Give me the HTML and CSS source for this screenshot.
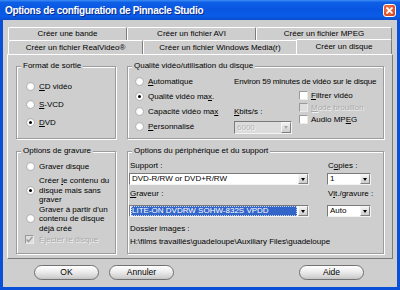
FILE: index.html
```html
<!DOCTYPE html>
<html lang="fr">
<head>
<meta charset="utf-8">
<title>Options de configuration de Pinnacle Studio</title>
<link rel="stylesheet" href="styles.css">
</head>
<body>
<div class="window">
  <div class="titlebar">
    <span class="title">Options de configuration de Pinnacle Studio</span>
    <span class="close"><svg width="7" height="7" viewBox="0 0 7 7"><path d="M0.5 0.5L6.5 6.5M6.5 0.5L0.5 6.5" stroke="#fff" stroke-width="1.6" fill="none"/></svg></span>
  </div>
  <div class="client">
    <div class="tabs">
      <div class="tabrow row1">
        <div class="tab">Créer une bande</div>
        <div class="tab">Créer un fichier AVI</div>
        <div class="tab">Créer un fichier MPEG</div>
      </div>
      <div class="tabrow row2">
        <div class="tab">Créer un fichier RealVideo®</div>
        <div class="tab">Créer un fichier Windows Media(r)</div>
        <div class="tab active">Créer un disque</div>
      </div>
    </div>
    <div class="panel">
      <fieldset class="group">
        <legend>Format de sortie</legend>
        <div class="format-opts">
          <div class="opt r18"><span class="radio"></span><span><u>C</u>D vidéo</span></div>
          <div class="opt r18"><span class="radio"></span><span><u>S</u>-VCD</span></div>
          <div class="opt r18"><span class="radio on"></span><span><u>D</u>VD</span></div>
        </div>
      </fieldset>
      <fieldset class="group">
        <legend>Qualité vidéo/utilisation du disque</legend>
        <div class="quality">
          <div class="q-radios">
            <div class="opt r15"><span class="radio"></span><span><u>A</u>utomatique</span></div>
            <div class="opt r15"><span class="radio on"></span><span>Qualité vidéo ma<u>x</u>.</span></div>
            <div class="opt r15"><span class="radio"></span><span>Capacité vidéo ma<u>x</u></span></div>
            <div class="opt r15"><span class="radio"></span><span><u>P</u>ersonnalisé</span></div>
          </div>
          <div class="q-right">
            <div class="estimate">Environ 59 minutes de vidéo sur le disque</div>
            <div class="q-lower">
              <div class="kbits">
                <div class="lbl"><u>K</u>bits/s :</div>
                <div class="select disabled small"><span class="val">6000</span><span class="arrow"></span></div>
              </div>
              <div class="checks">
                <div class="opt r12"><span class="check"></span><span><u>F</u>iltrer vidéo</span></div>
                <div class="opt r12 dis"><span class="check off"></span><span><u>M</u>ode brouillon</span></div>
                <div class="opt r12"><span class="check"></span><span>Audio MP<u>E</u>G</span></div>
              </div>
            </div>
          </div>
        </div>
      </fieldset>
      <fieldset class="group">
        <legend>Options de gravure</legend>
        <div class="burn">
          <div class="opt r12"><span class="radio"></span><span>Graver disque</span></div>
          <div class="opt multi first"><span class="radio on"></span><span>Créer <u>l</u>e contenu du<br>disque mais sans<br>graver</span></div>
          <div class="opt multi"><span class="radio"></span><span>Graver à partir d'un<br>contenu de disque<br>déjà créé</span></div>
          <div class="opt r13 dis eject"><span class="check off ticked"><svg width="7" height="7" viewBox="0 0 7 7"><path d="M0.5 3.5L2.5 5.5L6.5 1" stroke="#9a9a9a" stroke-width="1.4" fill="none"/></svg></span><span>Éjecter le disque</span></div>
        </div>
      </fieldset>
      <fieldset class="group">
        <legend>Options du périphérique et du support</legend>
        <div class="device">
          <div class="dev-grid">
            <div class="lbl first">Support :</div>
            <div class="lbl first">C<u>o</u>pies :</div>
            <div class="select s1"><span class="val">DVD-R/RW or DVD+R/RW</span><span class="arrow"></span></div>
            <div class="select s1"><span class="val">1</span><span class="arrow"></span></div>
            <div class="lbl second"><u>G</u>raveur :</div>
            <div class="lbl second">V<u>i</u>t./gravure :</div>
            <div class="select s2 focus"><span class="val"><span class="hl">LITE-ON DVDRW SOHW-832S VPDD</span></span><span class="arrow"></span></div>
            <div class="select s2"><span class="val">Auto</span><span class="arrow"></span></div>
          </div>
          <div class="lbl dossier">Dossier images :</div>
          <div class="lbl path">H:\films travaillés\guadeloupe\Auxiliary Files\guadeloupe</div>
        </div>
      </fieldset>
    </div>
    <div class="buttons">
      <div class="btn">OK</div>
      <div class="btn">Annuler</div>
      <div class="btn help">Aide</div>
    </div>
  </div>
</div>
</body>
</html>
```
FILE: styles.css
```css
html, body {
  margin: 0;
  padding: 0;
  background: #ffffff;
}
body {
  font-family: "Liberation Sans", Arial, sans-serif;
  font-size: 8px;
  color: #000;
}
.window {
  width: 400px;
  height: 290px;
  display: flex;
  flex-direction: column;
  background: #0a4fd8;
  box-sizing: border-box;
}
.titlebar {
  height: 20px;
  flex: none;
  display: flex;
  align-items: center;
  justify-content: space-between;
  padding: 0 4px 0 5px;
  background: linear-gradient(to bottom, #3d8cf5 0%, #0f5fe6 12%, #0856e2 45%, #0a5ce8 80%, #0a4ed0 100%);
}
.title {
  color: #fff;
  font-weight: bold;
  font-size: 10px;
  letter-spacing: -0.3px;
  text-shadow: 1px 1px 0 #0b2a8a;
  padding-top: 1px;
}
.close {
  width: 13px;
  height: 13px;
  box-sizing: border-box;
  border: 1px solid #fff;
  border-radius: 3px;
  background: radial-gradient(circle at 40% 40%, #f08a66 0%, #e2572e 55%, #c43a12 100%);
  display: flex;
  align-items: center;
  justify-content: center;
}
.close svg { display: block; }
.client {
  flex: 1;
  margin: 0 3px 3px;
  background: #cecece;
  padding: 7px 4px 0;
  display: flex;
  flex-direction: column;
}
.tabs {
  margin: 0 1px;
}
.tabrow {
  display: grid;
}
.row1 {
  grid-template-columns: 119px 129px 136px;
  height: 13px;
}
.row2 {
  grid-template-columns: 135px 154px 95px;
  height: 14px;
}
.tab {
  box-sizing: border-box;
  border-top: 1px solid #fff;
  border-left: 1px solid #fff;
  border-right: 1px solid #7c7c7c;
  border-radius: 2px 2px 0 0;
  text-align: center;
  white-space: nowrap;
  overflow: hidden;
}
.row1 .tab { line-height: 12px; }
.row2 .tab { line-height: 13px; }
.tab.active {
  position: relative;
  z-index: 1;
  height: 15px;
  margin-bottom: -1px;
  margin-top: -1px;
  margin-left: -1px;
  background: #cecece;
  line-height: 14px;
}
.panel {
  height: 205px;
  box-sizing: border-box;
  border: 1px solid;
  border-color: #fff #7c7c7c #7c7c7c #fff;
  display: grid;
  grid-template-columns: 100px 257px;
  grid-template-rows: 78px 108px;
  column-gap: 11px;
  row-gap: 7px;
  padding: 6px 0 0 8px;
}
.group {
  margin: 0;
  padding: 0;
  min-width: 0;
  border: 1px solid #9c9c9c;
  box-shadow: inset 1px 1px 0 #fff, 1px 1px 0 #fff;
  box-sizing: border-box;
}
.group legend {
  font-size: 8px;
  line-height: 10px;
  padding: 0 2px;
  margin-left: 4px;
  background: #cecece;
}
.opt {
  display: flex;
  align-items: center;
  gap: 4px;
  white-space: nowrap;
}
.r18 { height: 18px; }
.r15 { height: 15px; }
.r12 { height: 12px; }
.r13 { height: 13px; }
.radio {
  flex: none;
  width: 9px;
  height: 9px;
  box-sizing: border-box;
  border-radius: 50%;
  border: 1px solid #b4b4b4;
  background: radial-gradient(circle at 60% 60%, #ffffff 45%, #e6e6e6 100%);
  display: flex;
  align-items: center;
  justify-content: center;
}
.radio.on::after {
  content: "";
  width: 3px;
  height: 3px;
  border-radius: 50%;
  background: #000;
}
.check {
  flex: none;
  width: 9px;
  height: 9px;
  box-sizing: border-box;
  border: 1px solid;
  border-color: #9a9a9a #eaeaea #eaeaea #9a9a9a;
  background: #fff;
  display: flex;
  align-items: center;
  justify-content: center;
}
.check.off {
  background: #dedede;
}
.check svg { display: block; }
.dis {
  color: #a9a9a9;
  text-shadow: 1px 1px 0 #f2f2f2;
}
.format-opts {
  padding: 6px 0 0 9px;
}
.quality {
  display: grid;
  grid-template-columns: 106px 1fr;
  padding-top: 3px;
}
.q-radios {
  padding-left: 7px;
}
.estimate {
  line-height: 15px;
  white-space: nowrap;
  letter-spacing: -0.15px;
}
.q-lower {
  display: flex;
  gap: 7px;
}
.kbits {
  width: 58px;
  padding-top: 17px;
}
.lbl {
  line-height: 11px;
  white-space: nowrap;
}
.kbits .lbl { line-height: 12px; }
.select {
  height: 12px;
  box-sizing: border-box;
  border: 1px solid;
  border-color: #7a7a7a #f4f4f4 #f4f4f4 #7a7a7a;
  background: #fff;
  display: flex;
  align-items: stretch;
}
.select.small {
  height: 13px;
  margin-top: 3px;
}
.select .val {
  flex: 1;
  padding-left: 2px;
  line-height: 10px;
  white-space: nowrap;
  overflow: hidden;
}
.select.small .val { line-height: 11px; }
.select .arrow {
  flex: none;
  width: 10px;
  box-sizing: border-box;
  border: 1px solid;
  border-color: #f6f6f6 #808080 #808080 #f6f6f6;
  background: linear-gradient(#f2f2f2, #cdcdcd);
  display: flex;
  align-items: center;
  justify-content: center;
}
.select .arrow::after {
  content: "";
  width: 0;
  height: 0;
  border-left: 2.5px solid transparent;
  border-right: 2.5px solid transparent;
  border-top: 3px solid #000;
}
.select.disabled {
  background: #dcdcdc;
}
.select.disabled .val {
  color: #b4b4b4;
  text-shadow: 1px 1px 0 #f4f4f4;
}
.select.disabled .arrow::after {
  border-top-color: #a8a8a8;
}
.select.focus .val {
  padding: 0 1px 0 1px;
  display: flex;
}
.select.focus .hl {
  flex: 1;
  background: #3465c8;
  color: #fff;
  outline: 1px dotted #c8d6f2;
  outline-offset: -1px;
  line-height: 10px;
  padding-left: 1px;
  overflow: hidden;
}
.checks {
  display: flex;
  flex-direction: column;
}
.checks .opt { gap: 3px; }
.burn {
  padding: 4px 0 0 9px;
}
.multi {
  line-height: 9.5px;
}
.multi.first {
  margin-top: 4px;
}
.eject {
  padding-left: 0;
  margin-left: -1px;
  gap: 5px;
}
.device {
  padding: 4px 0 0 1px;
}
.dev-grid {
  display: grid;
  grid-template-columns: 180px 44px;
  column-gap: 18px;
}
.dev-grid .lbl { padding-left: 1px; }
.dev-grid .select.s1 { margin-top: 2px; }
.dev-grid .lbl.second { margin-top: 3px; }
.dev-grid .select.s2 { margin-top: 6px; }
.dossier {
  margin-top: 6px;
  padding-left: 1px;
}
.path {
  margin-top: 2px;
  padding-left: 1px;
}
.buttons {
  display: flex;
  gap: 10px;
  padding: 6px 29px 0 27px;
}
.btn {
  width: 65px;
  height: 15px;
  box-sizing: border-box;
  border: 1px solid #727272;
  border-radius: 8px;
  background: linear-gradient(#ffffff 0%, #ececec 45%, #d6d6d6 80%, #c4c4c4 100%);
  text-align: center;
  line-height: 13px;
  font-size: 8.5px;
}
.btn.help {
  margin-left: auto;
}
```
